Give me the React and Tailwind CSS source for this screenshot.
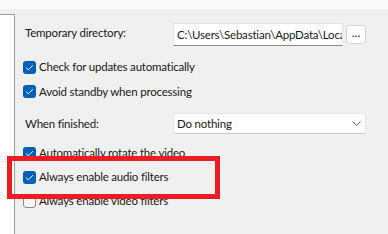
import React from "react";

const font = { fontFamily: 'Lato, "Noto Sans", sans-serif' };

function Box({ checked }) {
  if (!checked) {
    return <span className="w-[13px] h-[13px] rounded-[3px] border border-[#8a8a8a] bg-[#f6f6f6] shrink-0" />;
  }
  return (
    <span className="w-[13px] h-[13px] rounded-[3px] bg-[#005fb8] flex items-center justify-center shrink-0">
      <svg width="9" height="7" viewBox="0 0 9 7" fill="none">
        <path d="M1 3.6 L3.3 5.8 L8 1.2" stroke="#ffffff" strokeWidth="1" />
      </svg>
    </span>
  );
}

function Check({ checked, label, h = "h-[24px]" }) {
  return (
    <div className={`flex items-center gap-[3px] ${h}`}>
      <Box checked={checked} />
      <span className="text-[11.5px] tracking-[-0.2px] text-[#1a1a1a] leading-none">{label}</span>
    </div>
  );
}

export default function App() {
  return (
    <div className="w-[388px] h-[234px] bg-[#f0f0f0] relative overflow-hidden flex flex-col" style={font}>
      <div className="h-[9px] bg-[#f9f9f9] shrink-0" />
      <div className="flex flex-1">
        <div className="w-[15px] mt-[5px] bg-white border-t border-r border-[#a0a0a0]" />
        <div className="flex flex-col pl-[8px]">
          <div className="flex items-center mt-[14px] h-[23px]">
            <span className="w-[150px] pl-[2px] text-[11.5px] tracking-[-0.2px] text-[#1a1a1a] -mt-[3px]">Temporary directory:</span>
            <div className="w-[170px] h-[23px] bg-white border border-[#e6e6e6] border-b-[#8a8a8a] flex items-center pl-[3px] overflow-hidden">
              <span className="text-[11.5px] tracking-[-0.2px] text-[#1a1a1a] whitespace-nowrap">C:\Users\Sebastian\AppData\Loca</span>
            </div>
            <div className="ml-[3px] w-[20px] h-[19px] rounded-[4px] bg-[#fdfdfd] border border-[#d4d4d4] flex items-center justify-center text-[12px] text-[#1a1a1a] leading-none pb-[3px]">...</div>
          </div>
          <div className="mt-[9px]">
            <Check checked label="Check for updates automatically" />
            <Check checked label="Avoid standby when processing" h="h-[25px]" />
          </div>
          <div className="flex items-center mt-[9px] h-[21px]">
            <span className="w-[150px] pl-[2px] text-[11.5px] tracking-[-0.2px] text-[#1a1a1a]">When finished:</span>
            <div className="w-[193px] h-[21px] bg-white border border-[#e6e6e6] border-b-[#c8c8c8] rounded-[3px] flex items-center justify-between pl-[3px] pr-[4px]">
              <span className="text-[11.5px] tracking-[-0.2px] text-[#1a1a1a]">Do nothing</span>
              <svg width="9" height="5" viewBox="0 0 9 5" fill="none">
                <path d="M0.5 0.5 L4.5 4.3 L8.5 0.5" stroke="#606060" strokeWidth="1" />
              </svg>
            </div>
          </div>
          <div className="mt-[7px]">
            <Check checked label="Automatically rotate the video" />
            <Check checked label="Always enable audio filters" />
            <Check label="Always enable video filters" />
          </div>
        </div>
      </div>
      <div className="absolute left-[7px] top-[156px] w-[213px] h-[43px] border-[5px] border-[#ec1c24]" />
    </div>
  );
}
